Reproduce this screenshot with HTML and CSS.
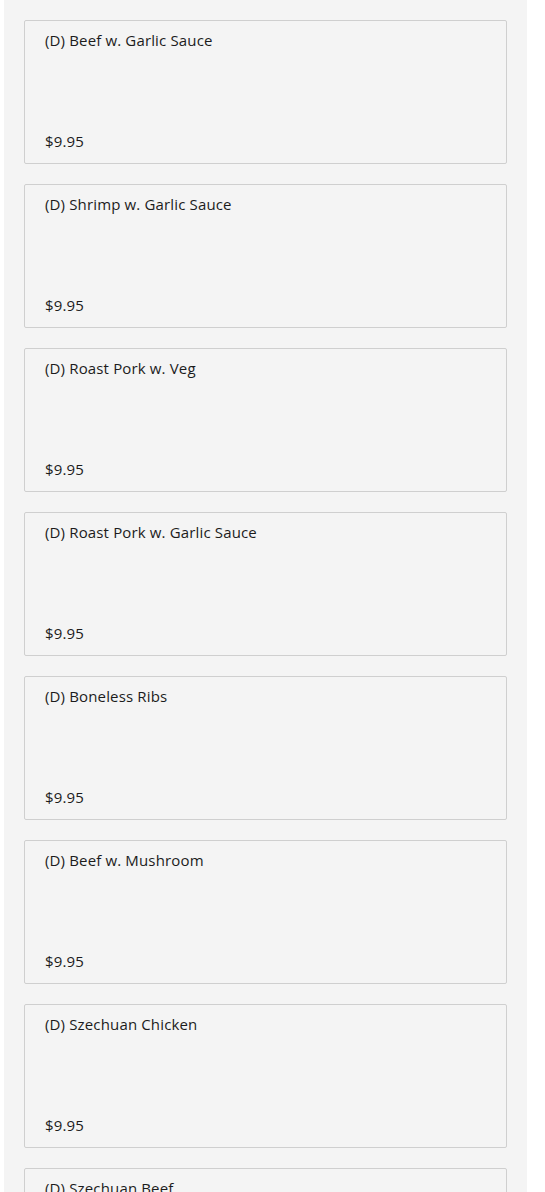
FILE: index.html
```html
<!DOCTYPE html>
<html lang="en">
<head>
  <meta charset="UTF-8">
  <meta name="viewport" content="width=device-width, initial-scale=1.0">
  <title>Menu</title>
  <link rel="stylesheet" href="styles.css">
</head>
<body>
  <!-- Список блюд -->
  <div class="menu-list">
    <div class="menu-item">
      <div class="item-name">(D) Beef w. Garlic Sauce</div>
      <div class="item-price">$9.95</div>
    </div>
    <div class="menu-item">
      <div class="item-name">(D) Shrimp w. Garlic Sauce</div>
      <div class="item-price">$9.95</div>
    </div>
    <div class="menu-item">
      <div class="item-name">(D) Roast Pork w. Veg</div>
      <div class="item-price">$9.95</div>
    </div>
    <div class="menu-item">
      <div class="item-name">(D) Roast Pork w. Garlic Sauce</div>
      <div class="item-price">$9.95</div>
    </div>
    <div class="menu-item">
      <div class="item-name">(D) Boneless Ribs</div>
      <div class="item-price">$9.95</div>
    </div>
    <div class="menu-item">
      <div class="item-name">(D) Beef w. Mushroom</div>
      <div class="item-price">$9.95</div>
    </div>
    <div class="menu-item">
      <div class="item-name">(D) Szechuan Chicken</div>
      <div class="item-price">$9.95</div>
    </div>
    <div class="menu-item">
      <div class="item-name">(D) Szechuan Beef</div>
      <div class="item-price">$9.95</div>
    </div>
  </div>
</body>
</html>
```

FILE: styles.css
```css
/* Общие стили */
* {
  margin: 0;
  padding: 0;
  box-sizing: border-box;
}
body {
  font-family: "Open Sans", Arial, sans-serif;
  background-color: #fff;
  color: #1c1c1c;
  overflow: hidden;
}
/* Серый контейнер со списком */
.menu-list {
  width: 523px;
  margin-left: 4px;
  background-color: #f4f4f4;
  padding: 20px;
  display: flex;
  flex-direction: column;
  gap: 20px;
}
/* Карточка блюда */
.menu-item {
  height: 144px;
  border: 1px solid #cfcfcf;
  border-radius: 2px;
  padding: 10px 20px 13px;
  display: flex;
  flex-direction: column;
  justify-content: space-between;
}
.item-name,
.item-price {
  font-size: 15px;
  line-height: 18px;
  letter-spacing: 0.15px;
}
```
